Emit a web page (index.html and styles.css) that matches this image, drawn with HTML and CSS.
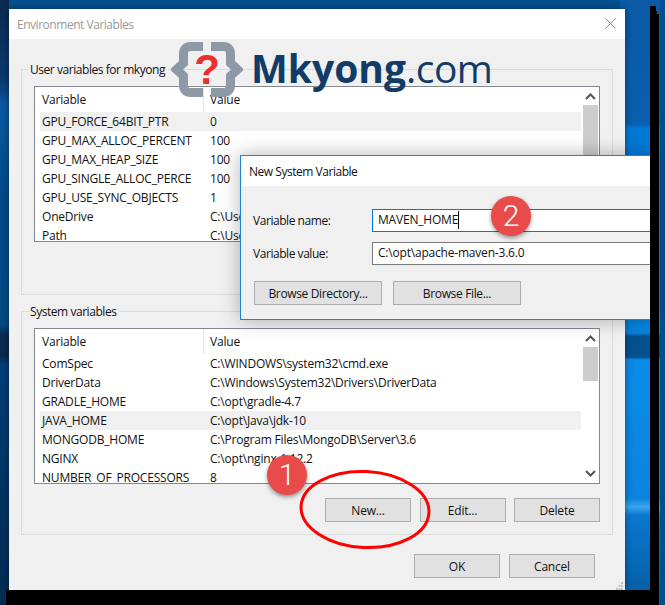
FILE: index.html
```html
<!DOCTYPE html>
<html lang="en">
<head>
<meta charset="utf-8">
<title>Environment Variables</title>
<link rel="stylesheet" href="styles.css">
</head>
<body>
<div class="desktop">
  <div class="dialog main">
    <div class="titlebar inactive">
      <span>Environment Variables</span>
      <svg class="close" width="11" height="11" viewBox="0 0 11 11"><path d="M.5.5l10 10M10.5.5l-10 10" stroke="#8a8a8a" fill="none"/></svg>
    </div>
    <div class="main-body">
      <section class="group user">
        <div class="legend">User variables for mkyong</div>
        <div class="list">
          <div class="rows">
            <div class="row head"><span class="name">Variable</span><span class="val">Value</span></div>
            <div class="row sel"><span class="name">GPU_FORCE_64BIT_PTR</span><span class="val">0</span></div>
            <div class="row"><span class="name">GPU_MAX_ALLOC_PERCENT</span><span class="val">100</span></div>
            <div class="row"><span class="name">GPU_MAX_HEAP_SIZE</span><span class="val">100</span></div>
            <div class="row"><span class="name">GPU_SINGLE_ALLOC_PERCE</span><span class="val">100</span></div>
            <div class="row"><span class="name">GPU_USE_SYNC_OBJECTS</span><span class="val">1</span></div>
            <div class="row"><span class="name">OneDrive</span><span class="val">C:\Users\mkyong\OneDrive</span></div>
            <div class="row"><span class="name">Path</span><span class="val">C:\Users\mkyong\AppData</span></div>
          </div>
          <div class="scroll">
            <svg class="chev" width="11" height="7" viewBox="0 0 11 7"><path d="M1 6l4.500-4.500L10 6" stroke="#555" stroke-width="2" fill="none"/></svg>
            <div class="thumb thumb-user"></div>
          </div>
        </div>
      </section>
      <section class="group system">
        <div class="legend">System variables</div>
        <div class="list">
          <div class="rows">
            <div class="row head"><span class="name">Variable</span><span class="val">Value</span></div>
            <div class="row"><span class="name">ComSpec</span><span class="val">C:\WINDOWS\system32\cmd.exe</span></div>
            <div class="row"><span class="name">DriverData</span><span class="val">C:\Windows\System32\Drivers\DriverData</span></div>
            <div class="row"><span class="name">GRADLE_HOME</span><span class="val">C:\opt\gradle-4.7</span></div>
            <div class="row sel"><span class="name">JAVA_HOME</span><span class="val">C:\opt\Java\jdk-10</span></div>
            <div class="row"><span class="name">MONGODB_HOME</span><span class="val">C:\Program Files\MongoDB\Server\3.6</span></div>
            <div class="row"><span class="name">NGINX</span><span class="val">C:\opt\nginx-1.12.2</span></div>
            <div class="row"><span class="name">NUMBER_OF_PROCESSORS</span><span class="val">8</span></div>
          </div>
          <div class="scroll">
            <svg class="chev" width="11" height="7" viewBox="0 0 11 7"><path d="M1 6l4.500-4.500L10 6" stroke="#555" stroke-width="2" fill="none"/></svg>
            <div class="thumb thumb-system"></div>
            <svg class="chev chev-down" width="11" height="7" viewBox="0 0 11 7"><path d="M1 1l4.500 4.500L10 1" stroke="#555" stroke-width="2" fill="none"/></svg>
          </div>
        </div>
        <div class="actions">
          <div class="btn">New...</div>
          <div class="btn">Edit...</div>
          <div class="btn">Delete</div>
        </div>
      </section>
      <div class="footer">
        <div class="btn">OK</div>
        <div class="btn">Cancel</div>
      </div>
    </div>
    <svg class="grip" width="8" height="8" viewBox="0 0 8 8"><path d="M5 0h2v2H5zM2.500 3h2v2h-2zM5 3h2v2H5zM0 6h2v2H0zM2.500 6h2v2h-2zM5 6h2v2H5z" fill="#c4c4c4"/></svg>
  </div>

  <div class="dialog sub">
    <div class="titlebar"><span>New System Variable</span></div>
    <div class="sub-body">
      <div class="field"><span class="field-label">Variable name:</span><div class="input focus"><span class="caret">MAVEN_HOME</span></div></div>
      <div class="field"><span class="field-label">Variable value:</span><div class="input">C:\opt\apache-maven-3.6.0</div></div>
      <div class="browse">
        <div class="btn wide">Browse Directory...</div>
        <div class="btn wide">Browse File...</div>
      </div>
    </div>
  </div>

  <div class="logo">
    <div class="logo-mark">
      <svg class="logo-braces" width="72" height="55" viewBox="0 0 72 55">
        <path d="M32 4.500H20Q12.500 4.500 12.500 12V21L5.500 27.500L12.500 34V43Q12.500 50.500 20 50.500H32M40 4.500H52Q59.500 4.500 59.500 12V21L66.500 27.500L59.500 34V43Q59.500 50.500 52 50.500H40" fill="none" stroke="#8e99a8" stroke-width="9"/>
      </svg>
      <span class="logo-q">?</span>
    </div>
    <div class="logo-text"><b>Mkyong</b>.com</div>
  </div>

  <svg class="ring" width="140" height="90" viewBox="0 0 140 90"><ellipse cx="70" cy="44.500" rx="64" ry="38" transform="rotate(3 70 44.500)" fill="none" stroke="#f00" stroke-width="3"/></svg>
  <div class="badge badge-one">1</div>
  <div class="badge badge-two">2</div>

  <div class="mask mask-right"></div>
  <div class="mask mask-bottom"></div>
</div>
</body>
</html>
```

FILE: styles.css
```css
* { box-sizing: border-box; }
html, body { margin: 0; padding: 0; }
body { width: 665px; height: 605px; overflow: hidden; }

.desktop {
  position: relative;
  width: 665px;
  height: 605px;
  overflow: hidden;
  font: 12px/19px "Open Sans", "Noto Sans", sans-serif;
  letter-spacing: -0.2px;
  color: #111;
  background-color: #04508f;
  background-image:
    linear-gradient(180deg, #0a5aa6 0, #0a5fae 124px, #0078d7 128px, #0685e0 333px, #05508f 336px, #05508f 357px, #0a8ce8 360px, #0a84df 498px, #3aa6ee 507px, #0a78d0 515px, #0660a8 590px),
    linear-gradient(180deg, #0a2a50 0, #0a3a70 80px, #0a5aa0 105px, #024a88 200px, #034a85 325px, #0a2a4f 335px, #0a2a4f 355px, #003f78 365px, #012c55 590px, #012c55 605px);
  background-repeat: no-repeat;
  background-size: 40px 605px, 9px 605px;
  background-position: 620px 0, 0 0;
}

.dialog { position: absolute; background: #f0f0f0; }

.main {
  left: 9px;
  top: 9px;
  width: 616px;
  height: 581px;
  box-shadow: 0 0 7px rgba(0, 0, 0, .45);
}

.titlebar {
  height: 30px;
  background: #fff;
  display: flex;
  align-items: center;
  justify-content: space-between;
  padding: 0 9px 0 8px;
  letter-spacing: -0.47px;
}
.inactive { color: #999; }
.close { margin-bottom: 2px; }

.main-body { padding: 30px 12px 0; }

.group { border: 1px solid #dcdcdc; padding: 0 12px; }
.user { height: 226px; }
.system { height: 224px; margin-top: 16px; }

.legend {
  width: fit-content;
  margin: -10px 0 0 -5px;
  padding: 0 3px 0 1px;
  background: #f0f0f0;
  letter-spacing: -0.45px;
}

.list {
  display: flex;
  height: 156px;
  margin-top: 7px;
  padding-left: 5px;
  border: 1px solid #828790;
  background: #fff;
  overflow: hidden;
}

.rows { width: 541px; flex: none; overflow: hidden; }
.row { display: flex; height: 19px; align-items: center; white-space: nowrap; padding-left: 2px; }
.sel { background: #f0f0f0; }
.head { height: 25px; }
.head .name { width: 162px; height: 25px; line-height: 25px; border-right: 1px solid #e5e5e5; }
.head .val { padding-left: 6px; }
.name { width: 168px; flex: none; }

.scroll {
  width: 15px;
  margin-left: 2px;
  flex: none;
  display: flex;
  flex-direction: column;
  align-items: center;
  padding-top: 6px;
}
.chev { flex: none; }
.thumb { width: 15px; background: #cdcdcd; margin-top: 5px; }
.thumb-user { height: 60px; }
.thumb-system { height: 34px; }
.chev-down { margin-top: 89px; }

.btn {
  height: 24px;
  width: 86px;
  border: 1px solid #adadad;
  background: #e1e1e1;
  display: flex;
  align-items: center;
  justify-content: center;
}

.actions { display: flex; justify-content: flex-end; gap: 8.5px; margin-top: 14px; }
.footer { display: flex; justify-content: flex-end; gap: 9px; margin: 19px 18px 0 0; }

.grip { position: absolute; right: 1px; bottom: 0; }

.sub {
  left: 240px;
  top: 155px;
  width: 412px;
  height: 165px;
  border: 1px solid #1883d7;
  box-shadow: 0 0 18px rgba(0, 0, 0, .3);
}
.sub-body { padding: 23px 0 0 12px; }

.field { display: flex; align-items: center; margin-bottom: 10px; }
.field-label { width: 119px; flex: none; letter-spacing: -0.45px; }
.input {
  flex: 1;
  height: 23px;
  padding-left: 5px;
  border: 1px solid #7a7a7a;
  background: #fff;
  line-height: 19px;
}
.focus { border-color: #0078d7; }
.caret { border-right: 1px solid #000; display: inline-block; height: 18px; line-height: 18px; }

.browse { display: flex; gap: 11px; margin: 16px 0 0 1px; }
.wide { width: 128px; letter-spacing: -0.35px; }

.logo {
  position: absolute;
  left: 171px;
  top: 40px;
  display: flex;
  align-items: center;
}
.logo-mark {
  position: relative;
  width: 72px;
  height: 55px;
  display: flex;
  align-items: center;
  justify-content: center;
}
.logo-braces { position: absolute; left: 0; top: 0; }
.logo-q {
  position: relative;
  font: 700 42px/55px "Liberation Sans", sans-serif;
  letter-spacing: 0;
  color: #ea2f2f;
}
.logo-text {
  margin-left: 8px;
  padding-bottom: 4px;
  font: 400 39px/55px "Open Sans", sans-serif;
  letter-spacing: -0.5px;
  color: #113c68;
}
.logo-text b { font-weight: 700; letter-spacing: 0; }

.ring { position: absolute; left: 295px; top: 465px; }

.badge {
  position: absolute;
  width: 40px;
  height: 40px;
  border-radius: 50%;
  background: #e94b4b;
  box-shadow: 0 2px 4px rgba(0, 0, 0, .4);
  color: #fff;
  font: 300 30px/40px "Roboto", sans-serif;
  letter-spacing: 0;
  text-align: center;
}
.badge-one { left: 267px; top: 455px; }
.badge-two { left: 491px; top: 196px; }

.mask { position: absolute; background: #000; }
.mask-right {
  left: 650px;
  top: 6px;
  width: 9px;
  height: 599px;
  clip-path: polygon(0 0, 6px 0, 6px 5px, 7px 5px, 7px 8px, 9px 8px, 9px 100%, 0 100%);
}
.mask-bottom { left: 6px; top: 590px; width: 653px; height: 15px; }
```
